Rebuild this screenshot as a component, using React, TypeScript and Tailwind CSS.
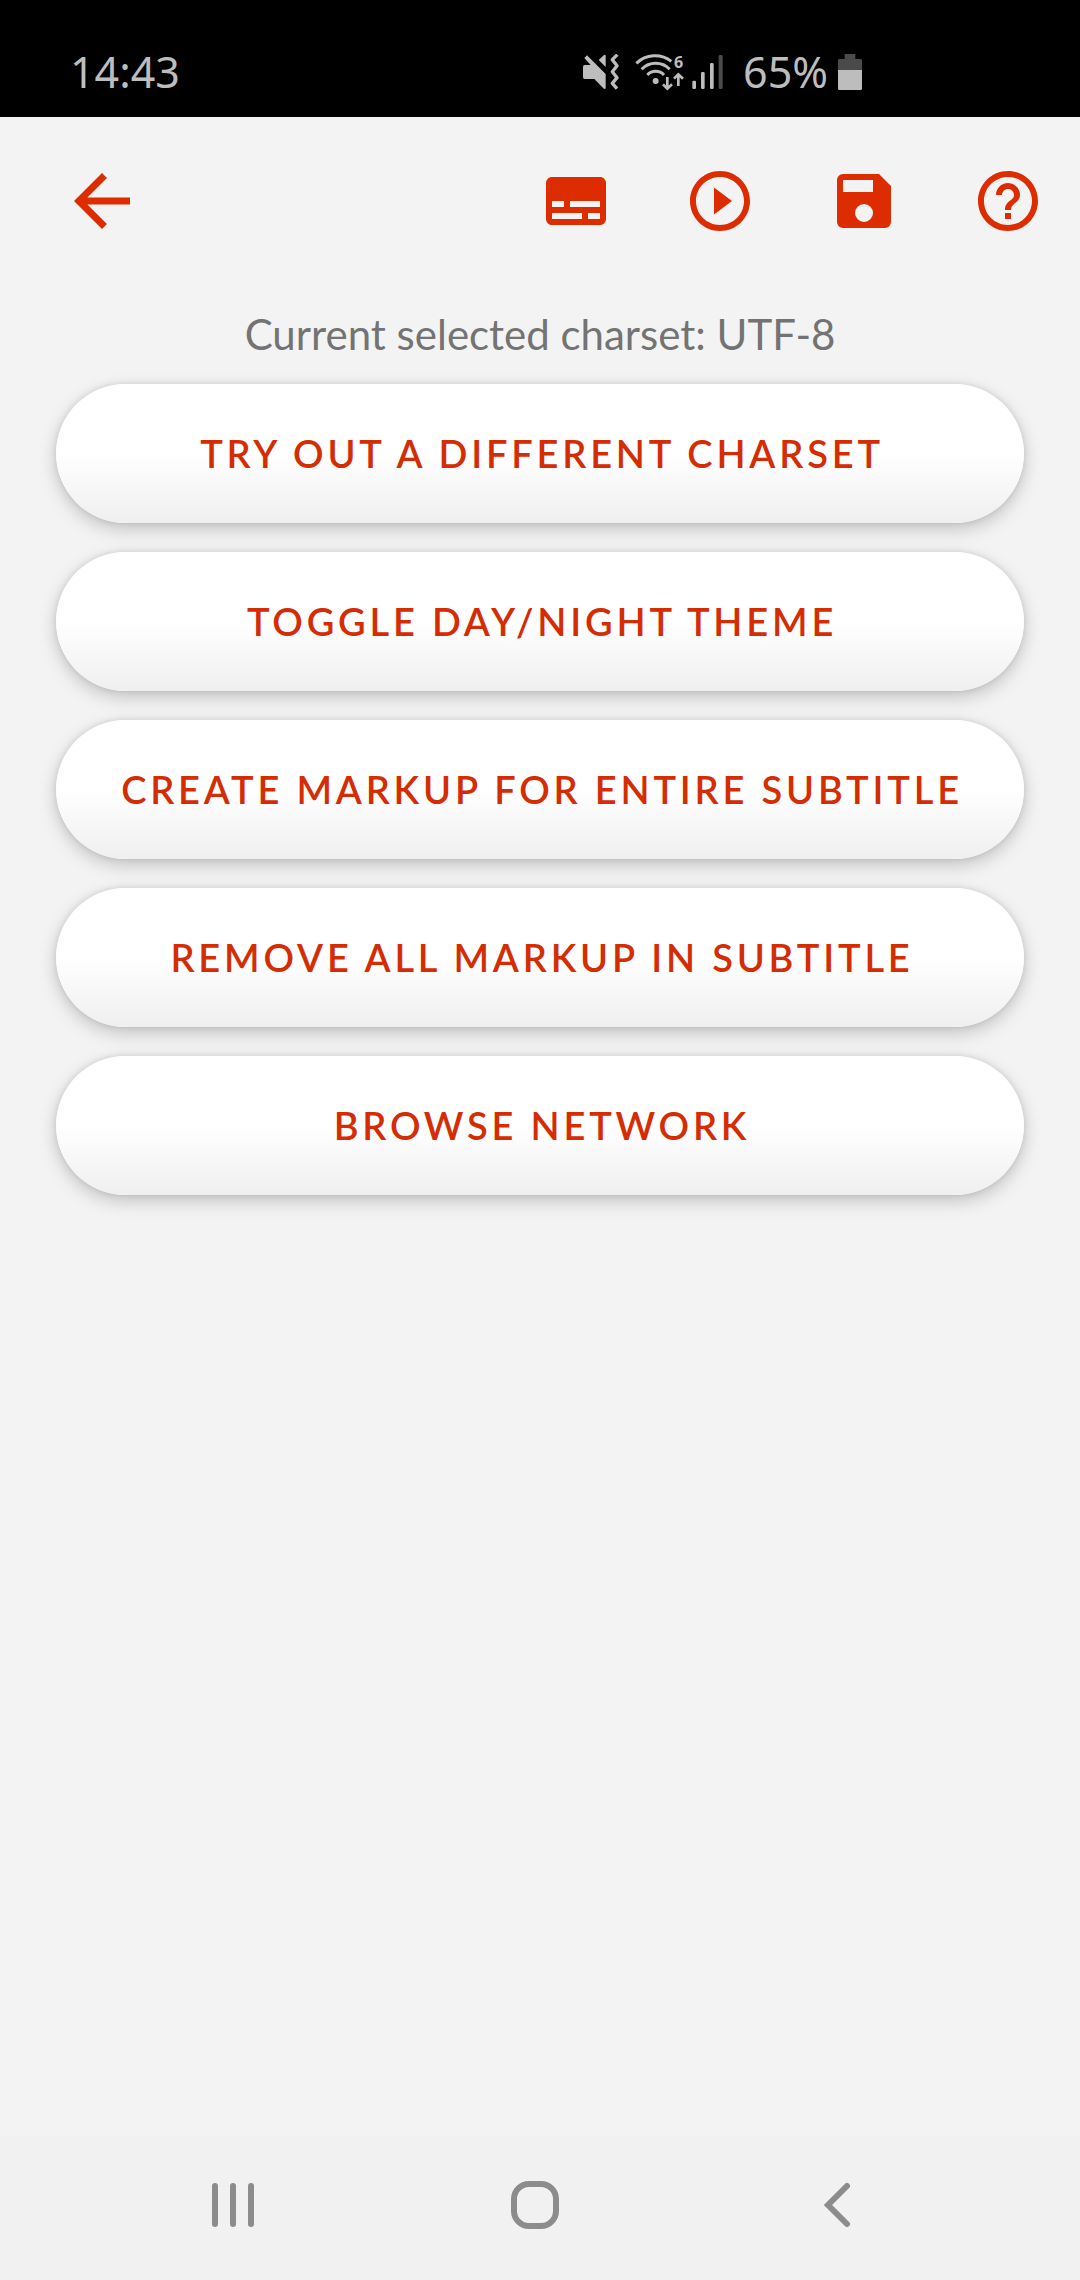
import React from "react";
import { MdArrowBack, MdHelpOutline, MdPlayCircleOutline, MdSubtitles } from "react-icons/md";

const actions = [
  "Try out a different charset",
  "Toggle day/night theme",
  "Create markup for entire subtitle",
  "Remove all markup in subtitle",
  "Browse network",
];

function MuteIcon() {
  return (
    <svg viewBox="0 0 108 108" className="w-9 h-9" fill="currentColor" aria-hidden="true">
      <path d="M5 33H23L4 12L12 4L68 60V103Q66 107 61 103L34 75H5Q0 75 0 70V38Q0 33 5 33Z" />
      <path d="M47 18L63 3Q68 0 68 6V39Z" />
      <path
        d="M103 2L88 17L102 35L88 53L102 71L88 88L102 104"
        fill="none"
        stroke="currentColor"
        strokeWidth="10"
        strokeLinejoin="round"
      />
    </svg>
  );
}

function WifiIcon() {
  return (
    <svg viewBox="0 0 147 111" className="w-[49px] h-[37px] overflow-visible" fill="none" stroke="currentColor" strokeWidth="9" aria-hidden="true">
      <path d="M4 31A80 80 0 0 1 109 25" />
      <path d="M20 49A58 58 0 0 1 104 49" />
      <path d="M37 66A34 34 0 0 1 87 66" />
      <circle cx="62" cy="84" r="9" fill="currentColor" stroke="none" />
      <path d="M97 72V106M84 94L97 107L111 94M130 99V65M117 77L130 64L144 77" strokeWidth="8" />
      <text x="117" y="45" fill="currentColor" stroke="none" className="font-['Noto_Sans',sans-serif] font-bold text-[48px]">
        6
      </text>
    </svg>
  );
}

function SignalIcon() {
  return (
    <svg viewBox="0 0 93 102" className="w-[31px] h-[34px]" fill="currentColor" aria-hidden="true">
      <rect x="1" y="77" width="11" height="25" rx="4" />
      <rect x="27" y="51" width="11" height="51" rx="4" />
      <rect x="54" y="24" width="11" height="78" rx="4" />
      <rect x="80" y="0" width="12" height="102" rx="4" fill="#4a4a4a" />
    </svg>
  );
}

function BatteryIcon() {
  return (
    <svg viewBox="0 0 72 108" className="w-6 h-9" aria-hidden="true">
      <path d="M20 0H52V15H68Q72 15 72 19V48H0V19Q0 15 4 15H20Z" fill="#4a4a4a" />
      <path d="M0 48H72V104Q72 108 68 108H4Q0 108 0 104Z" fill="currentColor" />
    </svg>
  );
}

function SaveIcon() {
  return (
    <svg viewBox="0 0 24 24" className="size-[72px]" fill="currentColor" aria-hidden="true">
      <path d="M17 3H5a2 2 0 0 0-2 2v14a2 2 0 0 0 2 2h14a2 2 0 0 0 2-2V7l-4-4zm-5 16a3 3 0 1 1 0-6 3 3 0 0 1 0 6zm3-10H5V5h10v4z" />
    </svg>
  );
}

function StatusBar() {
  return (
    <div className="h-[117px] bg-black text-[#bdbdbd] flex items-center justify-between pt-[26px] pl-[70px] pr-[218px] font-['Noto_Sans',sans-serif] text-[43px] leading-none">
      <span>14:43</span>
      <div className="flex items-center">
        <MuteIcon />
        <div className="flex items-center gap-2 ml-4">
          <WifiIcon />
          <SignalIcon />
        </div>
        <span className="ml-5 mr-[10px]">65%</span>
        <BatteryIcon />
      </div>
    </div>
  );
}

function Toolbar() {
  const item = "w-36 h-[168px] flex items-center justify-center";
  return (
    <header className="flex items-center text-[#dc2c00]">
      <button aria-label="Back" className="h-[168px] pl-[60px] mr-auto">
        <MdArrowBack className="size-[84px]" />
      </button>
      <button aria-label="Subtitles" className={item}>
        <MdSubtitles className="size-[72px]" />
      </button>
      <button aria-label="Play" className={item}>
        <MdPlayCircleOutline className="size-[72px]" />
      </button>
      <button aria-label="Save" className={item}>
        <SaveIcon />
      </button>
      <button aria-label="Help" className={item}>
        <MdHelpOutline className="size-[72px]" />
      </button>
    </header>
  );
}

function NavigationBar() {
  return (
    <nav className="h-36 bg-[#f1f1f1] text-[#8c8c8c] grid grid-cols-3 pl-[82px] pr-[92px] pb-[6px]">
      <button aria-label="Recent apps" className="flex items-center justify-center gap-3">
        <span className="w-[6px] h-11 rounded-full bg-current" />
        <span className="w-[6px] h-11 rounded-full bg-current" />
        <span className="w-[6px] h-11 rounded-full bg-current" />
      </button>
      <button aria-label="Home" className="flex items-center justify-center">
        <span className="size-12 rounded-[18px] border-[6px] border-current" />
      </button>
      <button aria-label="Back" className="flex items-center justify-center">
        <svg viewBox="0 0 28 46" className="w-7 h-[46px]" fill="none" stroke="currentColor" strokeWidth="6" strokeLinecap="round">
          <path d="M24 4L5 23L24 42" />
        </svg>
      </button>
    </nav>
  );
}

export default function App() {
  return (
    <div className="min-h-screen bg-[#f3f3f3] flex flex-col font-['Lato',sans-serif]">
      <StatusBar />
      <Toolbar />
      <main className="flex-1 px-14 pt-6">
        <p className="text-center text-[42px] leading-[50px] text-[#737373]">Current selected charset: UTF-8</p>
        <div className="mt-[25px] flex flex-col gap-[29px]">
          {actions.map((label) => (
            <button
              key={label}
              className="h-[139px] pl-1 rounded-full bg-linear-to-b from-white from-50% to-[#efefef] shadow-[0_6px_18px_rgba(0,0,0,0.2),0_0_6px_rgba(0,0,0,0.1)] text-[38px] font-semibold uppercase tracking-widest text-[#d42d04]"
            >
              {label}
            </button>
          ))}
        </div>
      </main>
      <NavigationBar />
    </div>
  );
}
